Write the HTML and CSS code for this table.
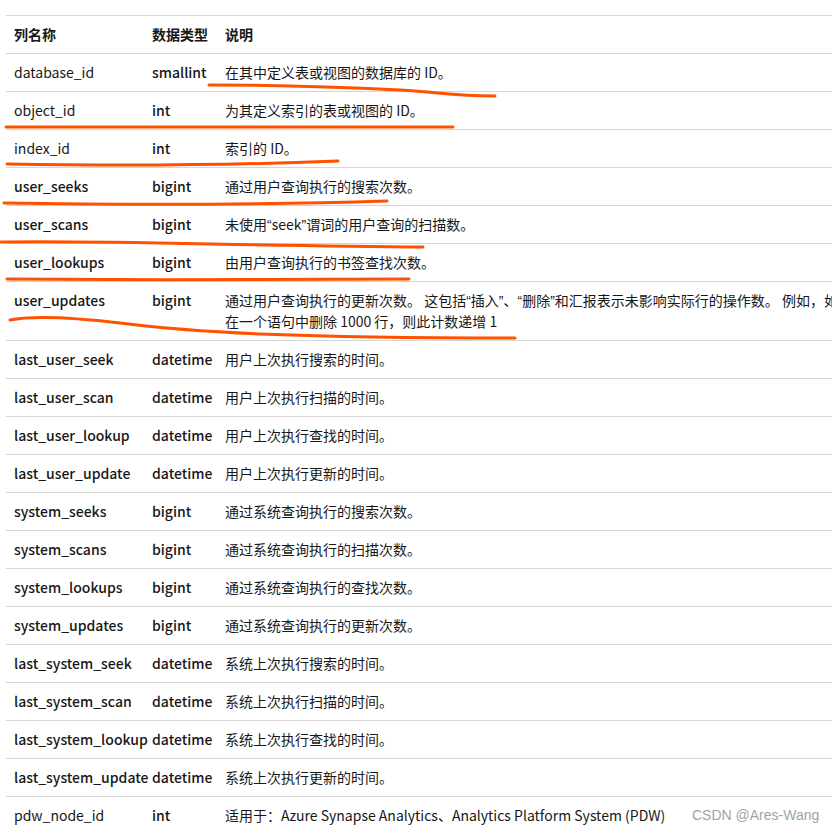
FILE: index.html
```html
<!DOCTYPE html>
<html lang="zh-CN">
<head>
<meta charset="utf-8">
<title>sys.dm_db_index_usage_stats</title>
<link rel="stylesheet" href="styles.css">
</head>
<body>
<div class="page">
  <table class="cols">
    <colgroup>
      <col class="c1">
      <col class="c2">
      <col class="c3">
    </colgroup>
    <thead>
      <tr><th>列名称</th><th>数据类型</th><th>说明</th></tr>
    </thead>
    <tbody>
      <tr><td>database_id</td><td class="t">smallint</td><td>在其中定义表或视图的数据库的 ID。</td></tr>
      <tr><td>object_id</td><td class="t">int</td><td>为其定义索引的表或视图的 ID。</td></tr>
      <tr><td>index_id</td><td class="t">int</td><td>索引的 ID。</td></tr>
      <tr><td class="b">user_seeks</td><td class="t">bigint</td><td>通过用户查询执行的搜索次数。</td></tr>
      <tr><td class="b">user_scans</td><td class="t">bigint</td><td>未使用<span class="q">“</span>seek<span class="q">”</span>谓词的用户查询的扫描数。</td></tr>
      <tr><td class="b">user_lookups</td><td class="t">bigint</td><td>由用户查询执行的书签查找次数。</td></tr>
      <tr><td class="b">user_updates</td><td class="t">bigint</td><td>通过用户查询执行的更新次数。 这包括<span class="q">“</span>插入<span class="q">”</span>、<span class="q">“</span>删除<span class="q">”</span>和汇报表示未影响实际行的操作数。 例如，如果<br>在一个语句中删除 1000 行，则此计数递增 1</td></tr>
      <tr><td class="b">last_user_seek</td><td class="t">datetime</td><td>用户上次执行搜索的时间。</td></tr>
      <tr><td class="b">last_user_scan</td><td class="t">datetime</td><td>用户上次执行扫描的时间。</td></tr>
      <tr><td class="b">last_user_lookup</td><td class="t">datetime</td><td>用户上次执行查找的时间。</td></tr>
      <tr><td class="b">last_user_update</td><td class="t">datetime</td><td>用户上次执行更新的时间。</td></tr>
      <tr><td class="b">system_seeks</td><td class="t">bigint</td><td>通过系统查询执行的搜索次数。</td></tr>
      <tr><td class="b">system_scans</td><td class="t">bigint</td><td>通过系统查询执行的扫描次数。</td></tr>
      <tr><td class="b">system_lookups</td><td class="t">bigint</td><td>通过系统查询执行的查找次数。</td></tr>
      <tr><td class="b">system_updates</td><td class="t">bigint</td><td>通过系统查询执行的更新次数。</td></tr>
      <tr><td class="b">last_system_seek</td><td class="t">datetime</td><td>系统上次执行搜索的时间。</td></tr>
      <tr><td class="b">last_system_scan</td><td class="t">datetime</td><td>系统上次执行扫描的时间。</td></tr>
      <tr><td class="b">last_system_lookup</td><td class="t">datetime</td><td>系统上次执行查找的时间。</td></tr>
      <tr><td class="b">last_system_update</td><td class="t">datetime</td><td>系统上次执行更新的时间。</td></tr>
      <tr><td>pdw_node_id</td><td class="t">int</td><td>适用于：Azure Synapse Analytics、Analytics Platform System (PDW)</td></tr>
    </tbody>
  </table>

  <svg class="marks" width="832" height="831" viewBox="0 0 832 831" aria-hidden="true">
    <g fill="none" stroke="#ff5200" stroke-width="3" stroke-linecap="round">
      <path d="M209,85 C280,85 340,87 400,90 C440,92 450,96 495,96"/>
      <path d="M6,127 C150,126 300,126 453,127"/>
      <path d="M7,164 C120,166 240,165 338,161"/>
      <path d="M4,203 C130,205 260,205 387,201"/>
      <path d="M1,242 C100,240 250,246 423,247"/>
      <path d="M7,279 C140,280 280,280 409,279"/>
      <path d="M10,320 C30,316 60,316 120,323 C200,333 300,338 515,338"/>
    </g>
  </svg>

  <div class="watermark">CSDN @Ares-Wang</div>
</div>
</body>
</html>
```

FILE: styles.css
```css
html, body {
  margin: 0;
  padding: 0;
  overflow: hidden;
  background: #ffffff;
}

.page {
  position: relative;
  width: 832px;
  height: 831px;
  padding: 15px 0 0 6px;
  box-sizing: border-box;
  overflow: hidden;
  font-family: "Noto Sans CJK SC", "Noto Sans", sans-serif;
  font-size: 14px;
  color: #171717;
}

.cols {
  border-collapse: collapse;
  table-layout: fixed;
  width: 1100px;
}

.c1 { width: 138px; }
.c2 { width: 73px; }

.cols th,
.cols td {
  text-align: left;
  vertical-align: top;
  padding: 8px;
  height: 21px;
  line-height: 21px;
  border-top: 1px solid #d6d6d6;
  white-space: nowrap;
}

.cols th {
  font-weight: 700;
}

.cols td.t,
.cols td.b {
  font-weight: 500;
}

.q {
  font-family: "Liberation Sans", Arial, sans-serif;
  line-height: 1;
}

.cols tbody tr:last-child td {
  border-bottom: 1px solid #d6d6d6;
}

.marks {
  position: absolute;
  left: 0;
  top: 0;
  pointer-events: none;
}

.watermark {
  position: absolute;
  left: 692px;
  top: 805px;
  font-family: "Liberation Sans", Arial, sans-serif;
  font-size: 14px;
  line-height: 20px;
  color: #a3a3a3;
  white-space: nowrap;
}
```
